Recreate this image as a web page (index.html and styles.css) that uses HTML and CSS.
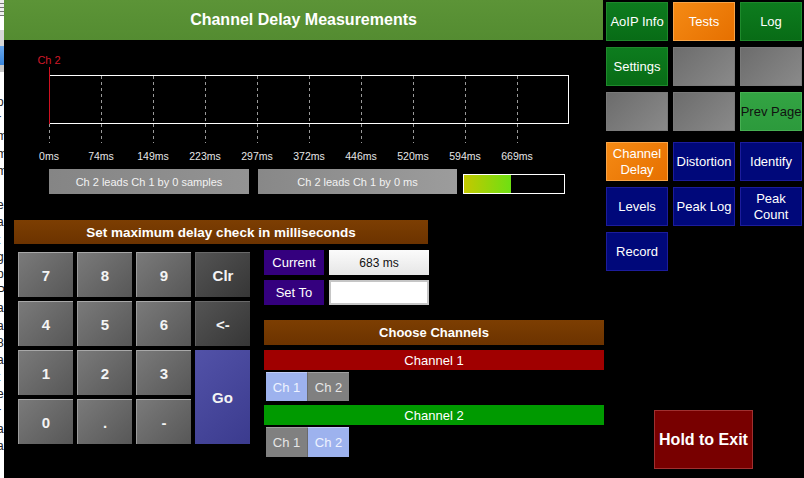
FILE: index.html
```html
<!DOCTYPE html>
<html>
<head>
<meta charset="utf-8">
<link rel="stylesheet" href="styles.css">
</head>
<body>
<div class="screen">
  <div class="sliver">
    <div class="sl-menu"></div>
    <div class="sl-white"></div>
    <div class="sl-bar"></div>
    <div class="sl-blue"></div>
    <div class="sl-bar2"></div>
    <div class="sl-text">
      <div>o</div><div>r</div><div>m</div><div>m</div><div>m</div><div>&nbsp;</div><div>e</div><div>a</div><div>t</div><div>g</div><div>p</div><div>P</div><div>a</div><div>a</div><div>8</div><div>a</div><div>t</div><div>e</div><div>r</div><div>a</div><div>a</div>
    </div>
  </div>

  <div class="main">
    <div class="title">Channel Delay Measurements</div>

    <svg class="graph" viewBox="4 40 600 129" width="600" height="129">
      <g class="dashes" stroke="#9a9a9a" stroke-width="1" stroke-dasharray="3 3">
        <line x1="49.5" y1="124" x2="49.5" y2="143"/>
        <line x1="101.5" y1="76" x2="101.5" y2="143"/>
        <line x1="153.5" y1="76" x2="153.5" y2="143"/>
        <line x1="205.5" y1="76" x2="205.5" y2="143"/>
        <line x1="257.5" y1="76" x2="257.5" y2="143"/>
        <line x1="309.5" y1="76" x2="309.5" y2="143"/>
        <line x1="361.5" y1="76" x2="361.5" y2="143"/>
        <line x1="413.5" y1="76" x2="413.5" y2="143"/>
        <line x1="465.5" y1="76" x2="465.5" y2="143"/>
        <line x1="517.5" y1="76" x2="517.5" y2="143"/>
      </g>
      <rect x="49.5" y="75.5" width="519" height="48" fill="none" stroke="#ffffff" stroke-width="1"/>
      <line x1="49.5" y1="67" x2="49.5" y2="124" stroke="#d01020" stroke-width="1"/>
      <text class="chlabel" x="49" y="64" text-anchor="middle">Ch 2</text>
      <g class="axis" text-anchor="middle">
        <text x="49" y="160">0ms</text>
        <text x="101" y="160">74ms</text>
        <text x="153" y="160">149ms</text>
        <text x="205" y="160">223ms</text>
        <text x="257" y="160">297ms</text>
        <text x="309" y="160">372ms</text>
        <text x="361" y="160">446ms</text>
        <text x="413" y="160">520ms</text>
        <text x="465" y="160">594ms</text>
        <text x="517" y="160">669ms</text>
      </g>
    </svg>

    <div class="status">
      <div class="sbox">Ch 2 leads Ch 1 by 0 samples</div>
      <div class="sbox sbox2">Ch 2 leads Ch 1 by 0 ms</div>
      <div class="meter"><div class="meter-fill" style="width:47px"></div></div>
    </div>

    <div class="lower">
      <div class="sec-head max-head">Set maximum delay check in milliseconds</div>
      <div class="lower-row">
        <div class="keypad">
          <div class="key">7</div>
          <div class="key">8</div>
          <div class="key">9</div>
          <div class="key dark">Clr</div>
          <div class="key">4</div>
          <div class="key">5</div>
          <div class="key">6</div>
          <div class="key dark">&lt;-</div>
          <div class="key">1</div>
          <div class="key">2</div>
          <div class="key">3</div>
          <div class="key go">Go</div>
          <div class="key">0</div>
          <div class="key">.</div>
          <div class="key">-</div>
        </div>
        <div class="side">
          <div class="field-row">
            <div class="flabel">Current</div>
            <div class="fval">683 ms</div>
          </div>
          <div class="field-row">
            <div class="flabel">Set To</div>
            <div class="finput"></div>
          </div>
          <div class="sec-head chan-head">Choose Channels</div>
          <div class="chan-bar red">Channel 1</div>
          <div class="toggle">
            <div class="tg on">Ch 1</div>
            <div class="tg tg2">Ch 2</div>
          </div>
          <div class="chan-bar green2">Channel 2</div>
          <div class="toggle last">
            <div class="tg">Ch 1</div>
            <div class="tg tg2 on">Ch 2</div>
          </div>
        </div>
      </div>
    </div>
  </div>

  <div class="nav">
    <div class="grid g1">
      <div class="btn green">AoIP Info</div>
      <div class="btn orange">Tests</div>
      <div class="btn green">Log</div>
      <div class="btn green">Settings</div>
      <div class="btn gray"></div>
      <div class="btn gray"></div>
      <div class="btn gray"></div>
      <div class="btn gray"></div>
      <div class="btn lgreen">Prev Page</div>
    </div>
    <div class="grid g2">
      <div class="btn orange">Channel<br>Delay</div>
      <div class="btn navy">Distortion</div>
      <div class="btn navy">Identify</div>
      <div class="btn navy">Levels</div>
      <div class="btn navy">Peak Log</div>
      <div class="btn navy">Peak<br>Count</div>
      <div class="btn navy">Record</div>
    </div>
    <div class="exit">Hold to Exit</div>
  </div>
</div>
</body>
</html>
```

FILE: styles.css
```css
* { box-sizing: border-box; }
html, body { margin: 0; padding: 0; background: #000; }
body {
  font-family: "Liberation Sans", Arial, sans-serif;
  width: 804px;
  height: 478px;
  overflow: hidden;
}
.screen { display: flex; height: 478px; }

/* sliver of a background window on the left edge */
.sliver {
  width: 4px;
  flex: none;
  background: #fff;
  overflow: hidden;
  display: flex;
  flex-direction: column;
}
.sl-menu {
  height: 16px;
  background: repeating-linear-gradient(#eeeeee 0 3px, #777 3px 4px);
}
.sl-white { height: 14px; background: #fff; }
.sl-bar { height: 16px; background: #d8d8d8; }
.sl-blue { height: 19px; background: linear-gradient(#6aa8ec, #3a86dc); }
.sl-bar2 { height: 7px; background: #c8c8c8; }
.sl-text {
  margin-top: 22px;
  margin-left: -3px;
  font-size: 12px;
  line-height: 17.2px;
  color: #222;
  white-space: nowrap;
}

.main {
  width: 600px;
  flex: none;
  display: flex;
  flex-direction: column;
}
.title {
  width: 599px;
  height: 40px;
  background: linear-gradient(#5c9437, #548c31);
  color: #fff;
  font-weight: bold;
  font-size: 16px;
  display: flex;
  align-items: center;
  justify-content: center;
}
.graph { display: block; width: 600px; height: 129px; }
.chlabel { fill: #d01828; font-size: 11px; font-family: "Liberation Sans", Arial, sans-serif; }
.axis text { fill: #e6e6e6; font-size: 10.5px; font-family: "Liberation Sans", Arial, sans-serif; }

.status {
  display: flex;
  align-items: flex-start;
  height: 25px;
  margin-left: 45px;
}
.sbox {
  width: 200px;
  height: 25px;
  background: linear-gradient(to right, #858585, #939393);
  color: #f2f2f2;
  font-size: 11px;
  display: flex;
  align-items: center;
  justify-content: center;
}
.sbox2 { margin-left: 9px; width: 199px; background: linear-gradient(to right, #888, #9c9c9c); }
.meter {
  margin-left: 6px;
  margin-top: 5px;
  width: 102px;
  height: 20px;
  border: 1px solid #fff;
  background: #000;
}
.meter-fill { height: 100%; background: linear-gradient(to right, #c4c800, #6ee012); }

.lower { margin-top: 26px; margin-left: 10px; }
.sec-head {
  height: 24px;
  background: linear-gradient(#7c3e02, #6c3300);
  color: #fff;
  font-weight: bold;
  font-size: 13px;
  display: flex;
  align-items: center;
  justify-content: center;
}
.max-head { width: 414px; font-size: 13.5px; }
.lower-row { display: flex; align-items: flex-start; margin-top: 6px; }

.keypad {
  margin-left: 4px;
  margin-top: 2px;
  display: grid;
  grid-template-columns: repeat(4, 55px);
  grid-template-rows: repeat(4, 45px);
  gap: 4px;
}
.key {
  background: linear-gradient(135deg, #7a7a7a, #575757);
  border-top: 1px solid #a8a8a8;
  border-left: 1px solid #9c9c9c;
  color: #f4f4f4;
  font-weight: bold;
  font-size: 15px;
  display: flex;
  align-items: center;
  justify-content: center;
}
.key.dark {
  background: linear-gradient(135deg, #545454, #363636);
  border-top-color: #6a6a6a;
  border-left-color: #606060;
}
.key.go {
  grid-row: span 2;
  background: linear-gradient(135deg, #5252a8, #3b3b8e);
  border: none;
}

.side { margin-left: 14px; width: 340px; display: flex; flex-direction: column; }
.field-row { display: flex; height: 25px; margin-bottom: 5px; }
.flabel {
  width: 60px;
  background: #34007e;
  color: #fff;
  font-size: 13px;
  display: flex;
  align-items: center;
  justify-content: center;
}
.fval {
  margin-left: 5px;
  width: 100px;
  background: linear-gradient(#fbfbfb, #e6e6e6);
  color: #111;
  font-size: 12px;
  display: flex;
  align-items: center;
  justify-content: center;
}
.finput {
  margin-left: 5px;
  width: 100px;
  background: #fff;
  border: 2px solid #c6c6c6;
}
.chan-head { margin-top: 10px; height: 25px; width: 340px; }
.chan-bar {
  margin-top: 5px;
  height: 20px;
  color: #fff;
  font-size: 13px;
  display: flex;
  align-items: center;
  justify-content: center;
}
.red { background: #a00000; }
.green2 { background: #009a00; margin-top: 4px; }
.toggle { display: flex; margin-top: 2px; margin-left: 2px; height: 29px; }
.toggle.last { height: 30px; }
.tg {
  width: 41px;
  background: #808080;
  color: #e6e6e6;
  font-size: 13px;
  border-top: 1px solid #a0a0a0;
  display: flex;
  align-items: center;
  justify-content: center;
}
.tg2 { width: 42px; border-left: 1px solid #6a6a6a; }
.tg.on { background: #9db2ee; color: #eef2ff; border-top-color: #c0ccf6; }

.nav { margin-left: 2px; width: 198px; display: flex; flex-direction: column; }
.grid {
  display: grid;
  grid-template-columns: repeat(3, 62px);
  grid-auto-rows: 39px;
  gap: 6px 5px;
}
.g1 { margin-top: 2px; }
.g2 { margin-top: 11px; }
.btn {
  display: flex;
  align-items: center;
  justify-content: center;
  text-align: center;
  white-space: nowrap;
  font-size: 13px;
  line-height: 16px;
  color: #fff;
  border: 1px solid transparent;
}
.green { background: linear-gradient(#0d7c1e, #086c16); border-color: #1e8a2c; }
.orange { background: linear-gradient(135deg, #f58a14, #e67000); border-color: #f8a448; }
.gray { background: linear-gradient(135deg, #6c6c6c, #8a8a8a); border-color: #7a7a7a; }
.lgreen { background: linear-gradient(#33a443, #2c9a3c); border-color: #46b052; color: #111; }
.navy { background: #00087a; border-color: #1c1c9c; }

.exit {
  margin-top: 139px;
  margin-left: 48px;
  width: 99px;
  height: 59px;
  background: #780000;
  border: 1px solid #a03030;
  color: #fff;
  font-weight: bold;
  font-size: 16px;
  display: flex;
  align-items: center;
  justify-content: center;
}
```
